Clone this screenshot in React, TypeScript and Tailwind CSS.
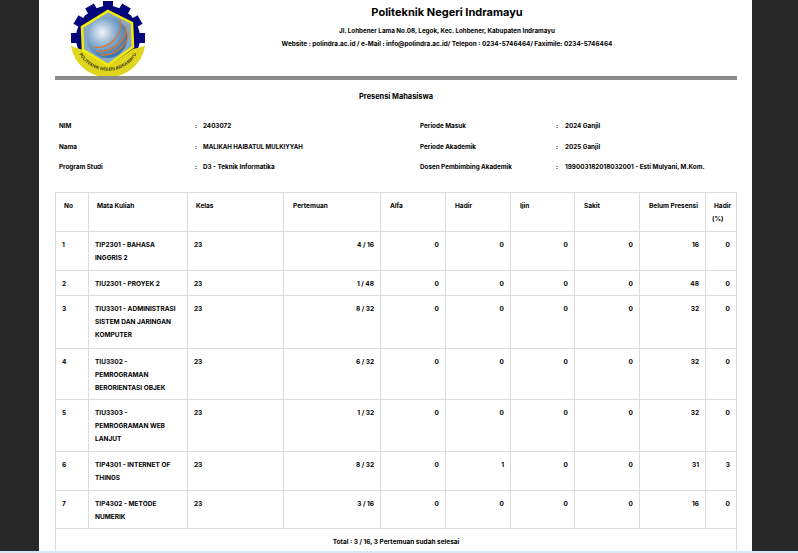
const rows = [
  ["1", "TIP2301 - BAHASA INGGRIS 2", "23", "4 / 16", "0", "0", "0", "0", "16", "0", "h-[39px]"],
  ["2", "TIU2301 - PROYEK 2", "23", "1 / 48", "0", "0", "0", "0", "48", "0", "h-[25px]"],
  ["3", "TIU3301 - ADMINISTRASI SISTEM DAN JARINGAN KOMPUTER", "23", "8 / 32", "0", "0", "0", "0", "32", "0", "h-[53px]"],
  ["4", "TIU3302 - PEMROGRAMAN BERORIENTASI OBJEK", "23", "6 / 32", "0", "0", "0", "0", "32", "0", "h-[51px]"],
  ["5", "TIU3303 - PEMROGRAMAN WEB LANJUT", "23", "1 / 32", "0", "0", "0", "0", "32", "0", "h-[52px]"],
  ["6", "TIP4301 - INTERNET OF THINGS", "23", "8 / 32", "0", "1", "0", "0", "31", "3", "h-[39px]"],
  ["7", "TIP4302 - METODE NUMERIK", "23", "3 / 16", "0", "0", "0", "0", "16", "0", "h-[38px]"],
];
const heads = ["Alfa", "Hadir", "Ijin", "Sakit", "Belum Presensi"];
const td = "border border-[#dcdcdc] align-top pt-[7px] pb-0";

function Logo() {
  const teeth = Array.from({ length: 9 }, (_, i) => i * 30 - 120);
  return (
    <svg width="76" height="76" viewBox="0 0 76 76" className="shrink-0 blur-[0.4px]">
      <defs>
        <radialGradient id="ball" cx="38%" cy="38%" r="68%">
          <stop offset="0%" stopColor="#f2f5f8" />
          <stop offset="45%" stopColor="#8fb2d2" />
          <stop offset="100%" stopColor="#2c6ea6" />
        </radialGradient>
        <path id="arc" d="M7 49 A33 33 0 0 0 69 49" />
      </defs>
      {teeth.map((a) => (
        <rect key={a} x="33" y="1" width="10" height="9" fill="#05087a" transform={`rotate(${a} 38 38)`} />
      ))}
      <circle cx="38" cy="38" r="32" fill="#05087a" />
      <path d="M1 46 A37.5 37.5 0 0 0 75 46 L63 49 L38 66 L13 50 Z" fill="#dfd51e" />
      <polygon points="38,11 62,23 63,47 38,65 13,50 12,27" fill="#8aa6c6" stroke="#f5ee00" strokeWidth="2.5" />
      <circle cx="37" cy="37.5" r="20.5" fill="url(#ball)" />
      <g fill="none" stroke="#e8701e" strokeWidth="1.2">
        <path d="M23 47 C38 50 54 36 50 19" />
        <path d="M26 51 C42 53 58 40 56 26" />
        <path d="M31 55 C45 56 60 44 58 31" />
      </g>
      <text fontSize="4.2" fontWeight="700" fill="#3c3c18" fontFamily="Inter, sans-serif">
        <textPath href="#arc" startOffset="50%" textAnchor="middle">POLITEKNIK NEGERI INDRAMAYU</textPath>
      </text>
    </svg>
  );
}

export default function App() {
  return (
    <div className="h-[553px] overflow-hidden bg-[#282828] font-['Inter',sans-serif] font-bold text-black">
      <div className="ml-[39px] h-[551px] w-[713px] overflow-hidden bg-white pl-[16px]">
        <div className="flex h-[80px] w-[682px] border-b-[4px] border-[#8a8a8a]">
          <div className="w-[102px] shrink-0 pl-[15px]"><Logo /></div>
          <div className="flex-1 pt-[4px] text-center">
            <div className="text-[11px] leading-[17px] font-bold">Politeknik Negeri Indramayu</div>
            <div className="mt-[5px] text-[6.25px] leading-[10px]">Jl. Lohbener Lama No.08, Legok, Kec. Lohbener, Kabupaten Indramayu</div>
            <div className="mt-[3px] text-[6.4px] leading-[10px]">Website : polindra.ac.id / e-Mail : info@polindra.ac.id/ Telepon : 0234-5746464/ Faximile: 0234-5746464</div>
          </div>
        </div>
        <div className="mt-[11px] w-[682px] text-center text-[7.4px] leading-[12px]">Presensi Mahasiswa</div>
        <div className="mt-[18px] grid w-[682px] grid-cols-[136px_8px_217px_136px_9px_1fr] gap-y-[10.5px] pl-[4px] text-[6.3px] leading-[10px]">
          <div>NIM</div><div>:</div><div>2403072</div><div>Periode Masuk</div><div>:</div><div>2024 Ganjil</div>
          <div>Nama</div><div>:</div><div className="text-[6.1px]">MALIKAH HAIBATUL MULKIYYAH</div><div>Periode Akademik</div><div>:</div><div>2025 Ganjil</div>
          <div>Program Studi</div><div>:</div><div>D3 - Teknik Informatika</div><div>Dosen Pembimbing Akademik</div><div>:</div><div>199003182018032001 - Esti Mulyani, M.Kom.</div>
        </div>
        <table className="mt-[20px] w-[681px] table-fixed border-collapse text-[6.5px] leading-[13px]">
          <colgroup>
            <col className="w-[33px]" /><col className="w-[99px]" /><col className="w-[96px]" /><col className="w-[97px]" />
            <col className="w-[65px]" /><col className="w-[65px]" /><col className="w-[64px]" /><col className="w-[65px]" /><col className="w-[66px]" /><col className="w-[31px]" />
          </colgroup>
          <thead>
            <tr className="h-[39px]">
              <th className={`${td} pl-[8px] text-left font-bold`}>No</th>
              <th className={`${td} pl-[8px] text-left font-bold`}>Mata Kuliah</th>
              <th className={`${td} pl-[8px] text-left font-bold`}>Kelas</th>
              <th className={`${td} pl-[9px] text-left font-bold`}>Pertemuan</th>
              {heads.map((h) => (
                <th key={h} className={`${td} pl-[9px] text-left font-bold`}>{h}</th>
              ))}
              <th className={`${td} pl-[6px] text-left font-bold`}><span className="ml-[2px] inline-block">Hadir</span> (%)</th>
            </tr>
          </thead>
          <tbody>
            {rows.map((r) => (
              <tr key={r[0]} className={r[10]}>
                <td className={`${td} pl-[6px]`}>{r[0]}</td>
                <td className={`${td} pl-[6px] pr-[7px]`}>{r[1]}</td>
                <td className={`${td} pl-[6px]`}>{r[2]}</td>
                {r.slice(3, 10).map((v, i) => (
                  <td key={i} className={`${td} pr-[6px] text-right`}>{v}</td>
                ))}
              </tr>
            ))}
            <tr className="h-[32px]">
              <td colSpan={10} className={`${td} text-center`}>Total : 3 / 16, 3 Pertemuan sudah selesai</td>
            </tr>
          </tbody>
        </table>
      </div>
      <div className="h-[2px] bg-[#d9e8f2]" />
    </div>
  );
}
